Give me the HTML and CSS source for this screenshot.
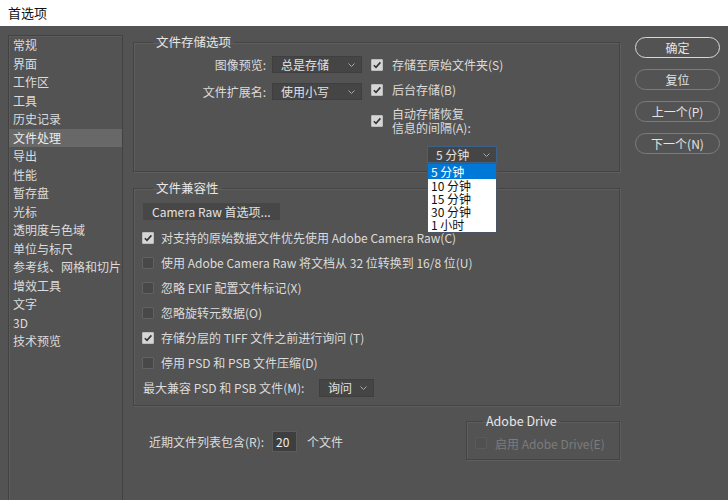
FILE: index.html
```html
<!DOCTYPE html>
<html lang="zh-CN">
  <head>
    <meta charset="UTF-8" />
    <meta name="viewport" content="width=device-width, initial-scale=1.0" />
    <title>首选项</title>
    <link rel="stylesheet" href="styles.css">
  </head>
  <body>
    <div class="titlebar">首选项</div>
    <div class="dialog">
      <ul class="nav">
        <li>常规</li>
        <li>界面</li>
        <li>工作区</li>
        <li>工具</li>
        <li>历史记录</li>
        <li class="active">文件处理</li>
        <li>导出</li>
        <li>性能</li>
        <li>暂存盘</li>
        <li>光标</li>
        <li>透明度与色域</li>
        <li>单位与标尺</li>
        <li>参考线、网格和切片</li>
        <li>增效工具</li>
        <li>文字</li>
        <li>3D</li>
        <li>技术预览</li>
      </ul>

      <div class="main">
        <fieldset class="group">
          <legend>文件存储选项</legend>
          <div class="save-body">
            <div class="save-fields">
              <label>图像预览:</label>
              <div class="select">
                <span>总是存储</span>
                <svg class="chev" width="7" height="4" viewBox="0 0 7 4"><polyline points="0.5,0.5 3.5,3.5 6.5,0.5" /></svg>
              </div>
              <label>文件扩展名:</label>
              <div class="select">
                <span>使用小写</span>
                <svg class="chev" width="7" height="4" viewBox="0 0 7 4"><polyline points="0.5,0.5 3.5,3.5 6.5,0.5" /></svg>
              </div>
            </div>
            <div class="save-checks">
              <div class="check-row">
                <span class="cb checked"><svg width="10" height="10" viewBox="0 0 10 10"><polyline points="1.8,5.2 4,7.4 8.4,2.4" /></svg></span>
                存储至原始文件夹(S)
              </div>
              <div class="check-row second">
                <span class="cb checked"><svg width="10" height="10" viewBox="0 0 10 10"><polyline points="1.8,5.2 4,7.4 8.4,2.4" /></svg></span>
                后台存储(B)
              </div>
              <div class="check-row tall">
                <span class="cb checked"><svg width="10" height="10" viewBox="0 0 10 10"><polyline points="1.8,5.2 4,7.4 8.4,2.4" /></svg></span>
                <span>自动存储恢复<br />信息的间隔(A):</span>
              </div>
              <div class="interval">
                <div class="select focus">
                  <span>5 分钟</span>
                  <svg class="chev" width="7" height="4" viewBox="0 0 7 4"><polyline points="0.5,0.5 3.5,3.5 6.5,0.5" /></svg>
                </div>
                <ul class="popup">
                  <li class="sel">5 分钟</li>
                  <li>10 分钟</li>
                  <li>15 分钟</li>
                  <li>30 分钟</li>
                  <li>1 小时</li>
                </ul>
              </div>
            </div>
          </div>
        </fieldset>

        <fieldset class="group compat">
          <legend>文件兼容性</legend>
          <div class="compat-body">
            <div class="raw-btn">Camera Raw 首选项...</div>
            <div class="check-list">
              <div class="line">
                <span class="cb checked"><svg width="10" height="10" viewBox="0 0 10 10"><polyline points="1.8,5.2 4,7.4 8.4,2.4" /></svg></span>
                对支持的原始数据文件优先使用 Adobe Camera Raw(C)
              </div>
              <div class="line"><span class="cb"></span>使用 Adobe Camera Raw 将文档从 32 位转换到 16/8 位(U)</div>
              <div class="line"><span class="cb"></span>忽略 EXIF 配置文件标记(X)</div>
              <div class="line"><span class="cb"></span>忽略旋转元数据(O)</div>
              <div class="line">
                <span class="cb checked"><svg width="10" height="10" viewBox="0 0 10 10"><polyline points="1.8,5.2 4,7.4 8.4,2.4" /></svg></span>
                存储分层的 TIFF 文件之前进行询问 (T)
              </div>
              <div class="line"><span class="cb"></span>停用 PSD 和 PSB 文件压缩(D)</div>
              <div class="line">
                <label class="max-label">最大兼容 PSD 和 PSB 文件(M):</label>
                <div class="select small">
                  <span>询问</span>
                  <svg class="chev" width="7" height="4" viewBox="0 0 7 4"><polyline points="0.5,0.5 3.5,3.5 6.5,0.5" /></svg>
                </div>
              </div>
            </div>
          </div>
        </fieldset>

        <div class="bottom-row">
          <div class="recent">
            <span>近期文件列表包含(R):</span>
            <div class="num-input">20</div>
            <span>个文件</span>
          </div>
          <fieldset class="group drive">
            <legend>Adobe Drive</legend>
            <div class="drive-body">
              <span class="cb disabled"></span>
              <span>启用 Adobe Drive(E)</span>
            </div>
          </fieldset>
        </div>
      </div>

      <div class="buttons">
        <button class="btn primary">确定</button>
        <button class="btn">复位</button>
        <button class="btn">上一个(P)</button>
        <button class="btn">下一个(N)</button>
      </div>
    </div>
  </body>
</html>
```

FILE: styles.css
```css
body {
  margin: 0;
  height: 500px;
  overflow: hidden;
  background-color: #535353;
  color: #dcdcdc;
  font-family: "Noto Sans CJK SC", "Liberation Sans", sans-serif;
  font-size: 12px;
}

.titlebar {
  height: 26px;
  line-height: 26px;
  padding-left: 8px;
  background-color: #fff;
  color: #111;
  font-size: 13px;
}

.dialog {
  display: flex;
  align-items: flex-start;
}

/* left category list */
.nav {
  box-sizing: border-box;
  width: 115px;
  height: 480px;
  margin: 9px 0 0 8px;
  padding: 0;
  list-style: none;
  border: 1px solid #424242;
  box-shadow: inset 1px 1px 0 #5c5c5c;
}

.nav li {
  height: 18.5px;
  line-height: 18.5px;
  padding-left: 4px;
  white-space: nowrap;
}

.nav li.active {
  background-color: #686868;
  color: #ececec;
}

.main {
  width: 487px;
  margin: 8px 0 0 10px;
}

.group {
  margin: 0;
  padding: 0;
  min-width: 0;
  border: 1px solid #444;
  box-shadow: 1px 1px 0 #5e5e5e, inset 1px 1px 0 #5e5e5e;
}

.group legend {
  margin-left: 19px;
  padding: 0 3px;
  line-height: 16px;
  font-size: 12.5px;
  color: #e6e6e6;
}

/* file save options */
.save-body {
  display: flex;
  padding: 6px 0 8px 0;
}

.save-fields {
  display: grid;
  grid-template-columns: 132px 90px;
  column-gap: 6px;
  row-gap: 10px;
  align-content: start;
}

.save-fields label {
  text-align: right;
  line-height: 17px;
}

.save-checks {
  display: flex;
  flex-direction: column;
  margin-left: 9px;
}

.check-row {
  display: flex;
  align-items: center;
  gap: 9px;
  height: 17px;
}

.check-row.second {
  margin-top: 8px;
}

.check-row.tall {
  height: auto;
  margin-top: 9px;
  line-height: 14px;
}

.interval {
  position: relative;
  width: 70px;
  margin: 11px 0 0 56px;
}

.select {
  box-sizing: border-box;
  display: flex;
  align-items: center;
  justify-content: space-between;
  height: 17px;
  padding: 0 6px 0 8px;
  background-color: #454545;
  border: 1px solid #3f3f3f;
  color: #e2e2e2;
}

.select.focus {
  border-color: #3d6288;
}

.select.small {
  width: 55px;
  height: 18px;
}

.chev {
  fill: none;
  stroke: #a8a8a8;
  stroke-width: 1;
}

.popup {
  position: absolute;
  top: 100%;
  left: 0;
  box-sizing: border-box;
  width: 70px;
  margin: 0;
  padding: 0 0 1px;
  list-style: none;
  background-color: #fff;
  border: 1px solid #4a5566;
  color: #111;
  font-size: 12px;
  line-height: 13px;
}

.popup li {
  height: 13px;
  padding-left: 3px;
}

.popup li.sel {
  height: 15px;
  line-height: 15px;
  background-color: #0078d7;
  color: #fff;
}

/* checkboxes */
.cb {
  box-sizing: border-box;
  flex: none;
  display: flex;
  align-items: center;
  justify-content: center;
  width: 12px;
  height: 12px;
  background-color: #484848;
  border: 1px solid #626262;
  border-radius: 1px;
}

.cb.checked {
  background-color: #d6d6d6;
  border-color: #bcbcbc;
}

.cb svg {
  fill: none;
  stroke: #333;
  stroke-width: 1.6;
}

.cb.disabled {
  background-color: #505050;
  border-color: #5a5a5a;
}

/* file compatibility */
.compat {
  margin-top: 8px;
}

.compat-body {
  padding: 7px 0 5px 8px;
}

.raw-btn {
  box-sizing: border-box;
  width: 137px;
  height: 17px;
  line-height: 17px;
  margin-left: 1px;
  padding-left: 9px;
  background-color: #474747;
  color: #e2e2e2;
}

.check-list {
  margin-top: 5px;
}

.line {
  display: flex;
  align-items: center;
  gap: 7px;
  height: 25px;
  white-space: nowrap;
}

.max-label {
  width: 169px;
  padding-left: 1px;
}

/* bottom row */
.bottom-row {
  display: flex;
  align-items: flex-start;
  margin-top: 7px;
}

.recent {
  display: flex;
  align-items: center;
  margin-top: 18px;
  padding-left: 16px;
}

.num-input {
  box-sizing: border-box;
  width: 25px;
  height: 21px;
  line-height: 19px;
  margin: 0 10px 0 8px;
  padding-left: 3px;
  background-color: #3e3e3e;
  border: 1px solid #5c5c5c;
  color: #eee;
}

.drive {
  width: 152px;
  margin-left: auto;
}

.drive legend {
  margin-left: 16px;
}

.drive-body {
  display: flex;
  align-items: center;
  gap: 8px;
  height: 18px;
  padding: 5px 0 7px 8px;
  color: #7c7c7c;
}

/* right buttons */
.buttons {
  display: flex;
  flex-direction: column;
  gap: 11px;
  width: 85px;
  margin: 11px 0 0 15px;
}

.btn {
  height: 21px;
  padding: 0;
  background-color: transparent;
  border: 1px solid #7c7c7c;
  border-radius: 11px;
  color: #e4e4e4;
  font-family: inherit;
  font-size: 12px;
}

.btn.primary {
  border-color: #d8d8d8;
}
```
